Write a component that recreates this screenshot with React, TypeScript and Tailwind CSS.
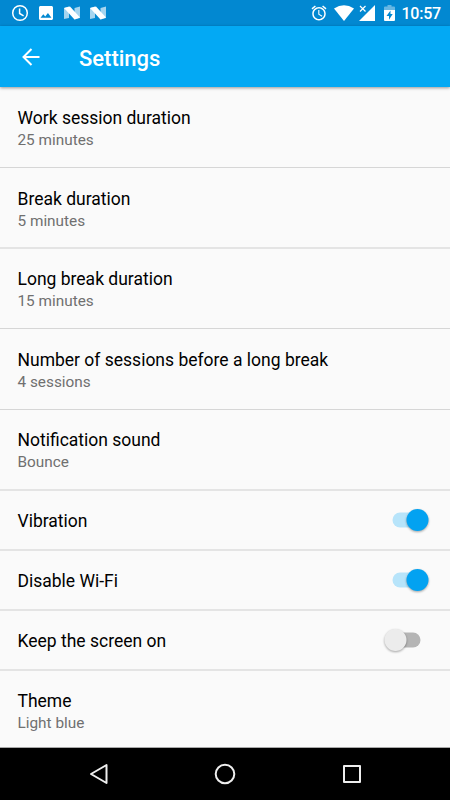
import clsx from "clsx"

type Row = {
  title: string
  summary?: string
  checked?: boolean
  className: string
}

const rows: Row[] = [
  { title: "Work session duration", summary: "25 minutes", className: "h-[81px] pt-[19px] border-b border-[#d6d6d6]" },
  { title: "Break duration", summary: "5 minutes", className: "h-[81px] pt-[19px] border-b-2 border-[#e4e4e4]" },
  { title: "Long break duration", summary: "15 minutes", className: "h-[80px] pt-[18px] border-b border-[#d6d6d6]" },
  { title: "Number of sessions before a long break", summary: "4 sessions", className: "h-[81px] pt-[19px] border-b border-[#d6d6d6]" },
  { title: "Notification sound", summary: "Bounce", className: "h-[81px] pt-[18px] border-b-2 border-[#e4e4e4]" },
  { title: "Vibration", checked: true, className: "h-[60px] pt-[18px] border-b-2 border-[#e4e4e4]" },
  { title: "Disable Wi-Fi", checked: true, className: "h-[60px] pt-[18px] border-b-2 border-[#e4e4e4]" },
  { title: "Keep the screen on", checked: false, className: "h-[60px] pt-[18px] border-b-2 border-[#e4e4e4]" },
  { title: "Theme", summary: "Light blue", className: "h-[77px] pt-[18px] border-b border-[#a8a8a8]" },
]

function NougatIcon() {
  return (
    <svg className="h-[14px] w-[17px]" viewBox="0 0 17 14" fill="#fff">
      <path d="M0 2L5 0.500v11.500L0 13z" opacity=".65" />
      <path d="M10.500 2L16 0.500v11.500L10.500 13.500z" opacity=".65" />
      <path d="M0 2L6 0.500 16 11.500 10.500 13.500z" />
    </svg>
  )
}

function StatusBar() {
  return (
    <div className="flex h-[26px] items-center bg-[#0288d1] pl-[11px] pr-[9px]">
      <svg className="h-[18px] w-[18px]" viewBox="0 0 18 18" fill="none" stroke="#fff" strokeWidth="1.5">
        <circle cx="9" cy="9" r="7.3" />
        <path d="M8.6 4.5v5l4 2.3" />
      </svg>
      <svg className="ml-[10px] h-[14px] w-[14px]" viewBox="3 3 18 18" fill="#fff">
        <path d="M21 19V5c0-1.1-.9-2-2-2H5c-1.1 0-2 .9-2 2v14c0 1.1.9 2 2 2h14c1.1 0 2-.9 2-2zM8.5 13.5l2.5 3.01L14.5 12l4.5 6H5l3.5-4.5z" />
      </svg>
      <div className="ml-[11px] flex gap-[9px]">
        <NougatIcon />
        <NougatIcon />
      </div>
      <svg className="ml-auto h-[18px] w-[18px]" viewBox="0 0 24 24" fill="#fff">
        <path d="M22 5.72l-4.6-3.86-1.29 1.53 4.6 3.86L22 5.72zM7.88 3.39L6.6 1.86 2 5.71l1.29 1.53 4.59-3.85zM12.5 8H11v6l4.75 2.85.75-1.23-4-2.37V8zM12 4c-4.97 0-9 4.03-9 9s4.02 9 9 9c4.97 0 9-4.03 9-9s-4.03-9-9-9zm0 16c-3.87 0-7-3.13-7-7s3.13-7 7-7 7 3.13 7 7-3.13 7-7 7z" />
      </svg>
      <svg className="ml-[6px] h-[16px] w-[20px]" viewBox="0 0 20 16" fill="#fff">
        <path d="M0 3.5Q10-3 20 3.5L10 16z" />
      </svg>
      <svg className="ml-[5px] h-[16px] w-[16px]" viewBox="0 0 16 16" fill="#fff">
        <path d="M16 0v16H0l7.5-7.5z" />
        <path d="M1 1l5.5 5.5M6.5 1L1 6.5" stroke="#fff" strokeWidth="1.2" />
      </svg>
      <svg className="ml-[9px] h-[16px] w-[11px]" viewBox="0 0 11 16" fill="#fff">
        <path d="M0 5V2.5q0-1 1-1h2.5V0h4v1.5H10q1 0 1 1V5z" opacity=".4" />
        <path fillRule="evenodd" d="M0 5h11v10q0 1-1 1H1q-1 0-1-1zM6.5 5.5L2.5 11H5v3.7L8.7 9H6.5z" />
      </svg>
      <span className="ml-[6px] pt-[2px] text-[16px] leading-none font-medium tracking-[-0.2px] text-white">10:57</span>
    </div>
  )
}

function Toggle({ checked }: { checked: boolean }) {
  return (
    <svg className="-mt-[5px] h-[32px] w-[54px] overflow-visible" viewBox="0 0 54 32">
      <rect x={checked ? 11.5 : 9.5} y="8.5" width="30" height="15" rx="7.5" fill={checked ? "#b7e4fa" : "#b5b5b5"} />
      <circle
        className="drop-shadow-[0_1px_1px_rgba(0,0,0,0.35)]"
        cx={checked ? 36.5 : 14.5}
        cy="16"
        r="11"
        fill={checked ? "#03a2f1" : "#ececec"}
      />
    </svg>
  )
}

export default function App() {
  return (
    <div className="flex h-[800px] w-[450px] flex-col overflow-hidden bg-[#fafafa] font-['Roboto',sans-serif]">
      <StatusBar />

      <header className="relative z-10 flex h-[61px] items-center bg-[#03a9f4] pl-[22px] shadow-[0_1px_3px_rgba(0,0,0,0.4)]">
        <svg className="h-[18px] w-[18px]" viewBox="0 0 18 18" fill="none" stroke="#fff" strokeWidth="2">
          <path d="M17.5 9H1.5M9.5 1L1.5 9l8 8" />
        </svg>
        <h1 className="ml-[39px] pt-[4px] text-[22px] leading-none font-medium text-white">Settings</h1>
      </header>

      <main className="flex flex-col">
        {rows.map(({ title, summary, checked, className }) => (
          <div key={title} className={clsx("flex shrink-0 justify-between pl-[17.5px] pr-[15px]", className)}>
            <div>
              <div className="text-[17.5px] leading-[24px] text-black">{title}</div>
              {summary && <div className="text-[15.35px] leading-[21px] text-[#707070]">{summary}</div>}
            </div>
            {checked !== undefined && <Toggle checked={checked} />}
          </div>
        ))}
      </main>

      {/* System navigation */}
      <nav className="flex h-[52px] items-center justify-between bg-black px-[87.5px]">
        <svg className="h-[22px] w-[22px]" viewBox="0 0 22 22" fill="none" stroke="#eee" strokeWidth="2" strokeLinejoin="round">
          <path d="M18.5 2v18L3 11z" />
        </svg>
        <svg className="h-[22px] w-[22px]" viewBox="0 0 22 22" fill="none" stroke="#eee" strokeWidth="2">
          <circle cx="11" cy="11" r="9.3" />
        </svg>
        <svg className="h-[22px] w-[22px]" viewBox="0 0 22 22" fill="none" stroke="#eee" strokeWidth="2" strokeLinejoin="round">
          <path d="M3 3h16v16H3z" />
        </svg>
      </nav>
    </div>
  )
}
